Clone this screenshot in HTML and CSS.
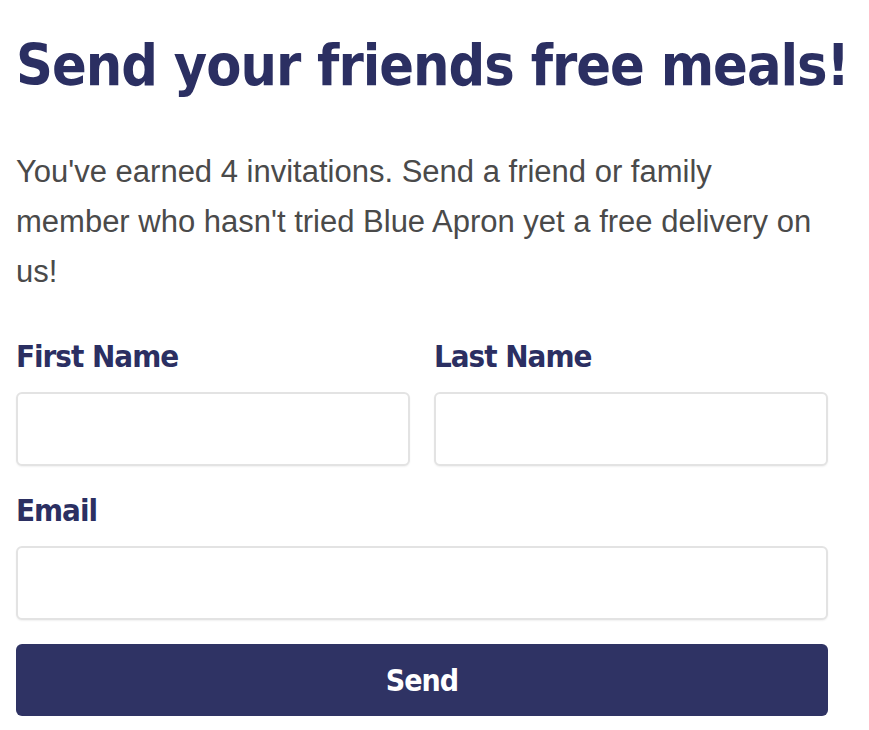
FILE: index.html
```html
<!DOCTYPE html>
<html lang="en">
<head>
<meta charset="utf-8">
<title>Send your friends free meals!</title>
<link rel="stylesheet" href="styles.css">
</head>
<body>
<main class="page">
  <h1 class="title">Send your friends free meals!</h1>
  <p class="intro">You've earned 4 invitations. Send a friend or family member who hasn't tried Blue Apron yet a free delivery on us!</p>
  <form class="form">
    <div class="row">
      <label class="field">
        <span class="label">First Name</span>
        <input class="input" type="text">
      </label>
      <label class="field">
        <span class="label">Last Name</span>
        <input class="input" type="text">
      </label>
    </div>
    <label class="field">
      <span class="label">Email</span>
      <input class="input" type="email">
    </label>
    <button class="send" type="button">Send</button>
  </form>
</main>
</body>
</html>
```

FILE: styles.css
```css
html, body {
  margin: 0;
  padding: 0;
  background: #ffffff;
}

.page {
  width: 812px;
  padding: 30px 0 0 16px;
  box-sizing: content-box;
}

.title {
  margin: 0;
  font-family: "DejaVu Sans", sans-serif;
  font-stretch: condensed;
  font-weight: 700;
  font-size: 57px;
  letter-spacing: -1px;
  line-height: 70px;
  color: #2b2f62;
  white-space: nowrap;
}

.intro {
  margin: 47px 0 0 0;
  width: 812px;
  font-family: "Liberation Sans", Arial, sans-serif;
  font-size: 31px;
  line-height: 50px;
  color: #4a4a4a;
}

.form {
  display: flex;
  flex-direction: column;
  margin-top: 39px;
}

.row {
  display: grid;
  grid-template-columns: 1fr 1fr;
  column-gap: 24px;
}

.field {
  display: flex;
  flex-direction: column;
}

.label {
  font-family: "DejaVu Sans", sans-serif;
  font-stretch: condensed;
  font-weight: 700;
  font-size: 31px;
  letter-spacing: -1px;
  line-height: 40px;
  color: #2b2f62;
  margin-bottom: 16px;
}

.input {
  height: 74px;
  box-sizing: border-box;
  border: 2px solid #e3e3e3;
  border-radius: 6px;
  background: #ffffff;
  box-shadow: 0 1px 2px rgba(0, 0, 0, 0.06);
  margin: 0 0 22px 0;
  outline: none;
}

.row .input {
  margin-bottom: 22px;
}

.field:last-of-type .input {
  margin-bottom: 24px;
}

.send {
  height: 72px;
  border: none;
  border-radius: 6px;
  background: #2f3364;
  color: #ffffff;
  font-family: "DejaVu Sans", sans-serif;
  font-stretch: condensed;
  font-weight: 700;
  font-size: 30px;
  letter-spacing: -1px;
  cursor: pointer;
}
```
